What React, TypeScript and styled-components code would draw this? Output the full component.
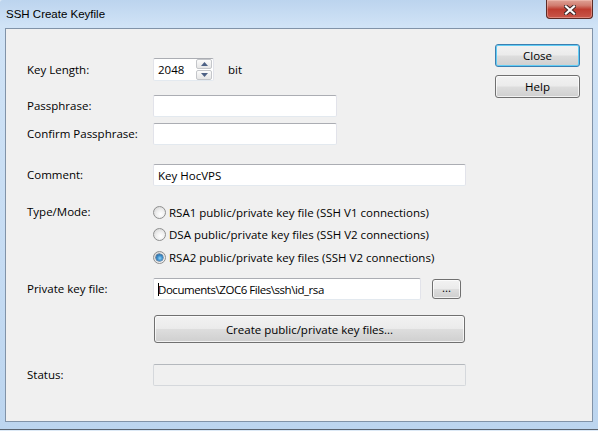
import React from "react";
import styled, { createGlobalStyle, css } from "styled-components";

const UI_FONT = `"Open Sans", "DejaVu Sans Condensed", sans-serif`;
const TITLE_FONT = `"Liberation Sans", "Noto Sans", sans-serif`;

const GlobalStyle = createGlobalStyle`
  html, body { margin: 0; padding: 0; }
  body { width: 598px; height: 431px; overflow: hidden; background: #dce9f6; }
  * { box-sizing: border-box; }
`;

const Window = styled.div`
  width: 598px;
  height: 430px;
  display: flex;
  flex-direction: column;
  background: linear-gradient(to bottom, #bcd4ee 0px, #d0e3f6 26px, #c6dcf3 60%, #bcd5ef 100%);
  border-bottom: 1px solid #5a6470;
  border-top-left-radius: 3px;
  font-family: ${UI_FONT};
  font-size: 11.5px;
  color: #000;
`;

const TitleBar = styled.div`
  height: 28px;
  flex: none;
  display: flex;
  align-items: flex-start;
  justify-content: space-between;
  padding-left: 6px;
`;

const Title = styled.div`
  font-family: ${TITLE_FONT};
  font-size: 11.5px;
  line-height: 16px;
  margin-top: 6px;
  color: #000;
`;

const CaptionClose = styled.div`
  width: 47px;
  height: 19px;
  margin-right: 5px;
  border: 1px solid #5c2b26;
  border-top: none;
  border-radius: 0 0 4px 4px;
  background: linear-gradient(
    to bottom,
    #dfa296 0%,
    #d17d70 30%,
    #be3d30 52%,
    #c2443700 100%
  ),
    #c9574a;
  box-shadow: inset 0 0 0 1px rgba(255, 210, 200, 0.4);
  display: flex;
  align-items: center;
  justify-content: center;
  padding-top: 1px;
`;

const Client = styled.div`
  flex: 1;
  margin: 0 5px 7px 5px;
  border: 1px solid #8193a8;
  background: #f0f0f0;
  display: flex;
`;

const FormColumn = styled.div`
  flex: 1;
  padding: 29px 0 0 21px;
  display: flex;
  flex-direction: column;
`;

const SideColumn = styled.div`
  width: 85px;
  margin-right: 12px;
  padding-top: 15px;
  display: flex;
  flex-direction: column;
  gap: 8px;
`;

const Row = styled.div<{ $h: number; $mt?: number }>`
  display: grid;
  grid-template-columns: 126px auto;
  align-items: center;
  justify-content: start;
  height: ${(p) => p.$h}px;
  margin-top: ${(p) => p.$mt ?? 0}px;
`;

const BlockRow = styled.div<{ $mt?: number }>`
  display: grid;
  grid-template-columns: 126px auto;
  align-items: start;
  justify-content: start;
  margin-top: ${(p) => p.$mt ?? 0}px;
`;

const Label = styled.div`
  line-height: 22px;
  white-space: nowrap;
`;

const Inline = styled.div`
  display: flex;
  align-items: center;
`;

const TextBox = styled.div<{ $w: number; $disabled?: boolean; $tight?: boolean }>`
  width: ${(p) => p.$w}px;
  height: 22px;
  border: 1px solid #e2e3ea;
  border-top-color: #abadb3;
  border-bottom-color: #e3e9ef;
  border-radius: 2px;
  background: #fff;
  padding-left: 4px;
  display: flex;
  align-items: center;
  white-space: nowrap;
  overflow: hidden;
  letter-spacing: ${(p) => (p.$tight ? "-0.45px" : "normal")};
  ${(p) =>
    p.$disabled &&
    css`
      background: #f0f0f0;
      border-color: #d5d8dc;
      border-top-color: #b4b8bd;
    `}
`;

const SpinBox = styled(TextBox)`
  height: 23px;
  padding-right: 1px;
  justify-content: space-between;
`;

const SpinButtons = styled.div`
  display: flex;
  flex-direction: column;
  gap: 1px;
`;

const SpinButton = styled.div`
  width: 16px;
  height: 10px;
  border: 1px solid #c4c6ca;
  border-radius: 2px;
  background: linear-gradient(to bottom, #fbfbfb, #e6e6e6);
  display: flex;
  align-items: center;
  justify-content: center;
`;

const Unit = styled.span`
  margin-left: 14px;
`;

const Caret = styled.span`
  display: inline-block;
  width: 1px;
  height: 13px;
  background: #000;
  margin-right: -1px;
`;

const buttonLook = css`
  font-family: ${UI_FONT};
  font-size: 11.5px;
  color: #000;
  border: 1px solid #707070;
  border-radius: 3px;
  background: linear-gradient(to bottom, #f2f2f2 0%, #ebebeb 48%, #dddddd 52%, #cfcfcf 100%);
  box-shadow: inset 0 0 0 1px rgba(255, 255, 255, 0.7);
  display: flex;
  align-items: center;
  justify-content: center;
  padding: 0;
`;

const PushButton = styled.div<{ $default?: boolean }>`
  ${buttonLook};
  height: 23px;
  ${(p) =>
    p.$default &&
    css`
      border-color: #3c7fb1;
      box-shadow: inset 0 0 0 1px #62cdf5;
    `}
`;

const BrowseButton = styled.div`
  ${buttonLook};
  width: 29px;
  height: 20px;
  margin-left: 11px;
  padding-bottom: 3px;
`;

const CreateButton = styled.div`
  ${buttonLook};
  width: 311px;
  height: 28px;
  margin-left: 1px;
`;

const RadioList = styled.div`
  display: flex;
  flex-direction: column;
`;

const RadioRow = styled.div<{ $h: number }>`
  height: ${(p) => p.$h}px;
  display: flex;
  align-items: center;
  white-space: nowrap;
`;

const RadioCircle = styled.span<{ $checked?: boolean }>`
  width: 13px;
  height: 13px;
  border-radius: 50%;
  border: 1px solid #8e8f8f;
  background: radial-gradient(circle at 60% 65%, #ffffff 0%, #f0f0f0 40%, #cfcfcf 100%);
  margin-right: 3px;
  display: flex;
  align-items: center;
  justify-content: center;
  flex: none;
  &::after {
    content: "";
    display: ${(p) => (p.$checked ? "block" : "none")};
    width: 7px;
    height: 7px;
    border-radius: 50%;
    background: radial-gradient(circle at 55% 60%, #8fd3fb 0%, #3b8cc8 45%, #174f86 100%);
    box-shadow: 0 0 0 0.5px #1b3f66;
  }
`;

const Arrow = ({ up }: { up?: boolean }) => (
  <svg width="7" height="4" viewBox="0 0 7 4">
    <path d={up ? "M0 4 L3.5 0 L7 4 Z" : "M0 0 L3.5 4 L7 0 Z"} fill="#4d6185" />
  </svg>
);

const CloseGlyph = () => (
  <svg width="12" height="10" viewBox="0 0 12 10">
    <path
      d="M2 1.5 L10 8.5 M10 1.5 L2 8.5"
      stroke="#3a2525"
      strokeWidth="4"
      strokeLinecap="square"
    />
    <path
      d="M2 1.5 L10 8.5 M10 1.5 L2 8.5"
      stroke="#ffffff"
      strokeWidth="2.2"
      strokeLinecap="square"
    />
  </svg>
);

const modes = [
  { text: "RSA1 public/private key file (SSH V1 connections)", h: 22 },
  { text: "DSA public/private key files (SSH V2 connections)", h: 23 },
  { text: "RSA2 public/private key files (SSH V2 connections)", h: 22, checked: true },
];

export default function App() {
  return (
    <>
      <GlobalStyle />
      <Window>
        <TitleBar>
          <Title>SSH Create Keyfile</Title>
          <CaptionClose>
            <CloseGlyph />
          </CaptionClose>
        </TitleBar>
        <Client>
          <FormColumn>
            <Row $h={23}>
              <Label>Key Length:</Label>
              <Inline>
                <SpinBox $w={61}>
                  <span>2048</span>
                  <SpinButtons>
                    <SpinButton>
                      <Arrow up />
                    </SpinButton>
                    <SpinButton>
                      <Arrow />
                    </SpinButton>
                  </SpinButtons>
                </SpinBox>
                <Unit>bit</Unit>
              </Inline>
            </Row>
            <Row $h={22} $mt={14}>
              <Label>Passphrase:</Label>
              <TextBox $w={184} />
            </Row>
            <Row $h={22} $mt={6}>
              <Label>Confirm Passphrase:</Label>
              <TextBox $w={184} />
            </Row>
            <Row $h={22} $mt={19}>
              <Label>Comment:</Label>
              <TextBox $w={313}>Key HocVPS</TextBox>
            </Row>
            <BlockRow $mt={15}>
              <Label>Type/Mode:</Label>
              <RadioList>
                {modes.map((m) => (
                  <RadioRow key={m.text} $h={m.h}>
                    <RadioCircle $checked={m.checked} />
                    {m.text}
                  </RadioRow>
                ))}
              </RadioList>
            </BlockRow>
            <Row $h={22} $mt={10}>
              <Label>Private key file:</Label>
              <Inline>
                <TextBox $w={268} $tight>
                  <Caret />
                  Documents\ZOC6 Files\ssh\id_rsa
                </TextBox>
                <BrowseButton>...</BrowseButton>
              </Inline>
            </Row>
            <Row $h={28} $mt={15}>
              <span />
              <CreateButton>Create public/private key files...</CreateButton>
            </Row>
            <Row $h={23} $mt={20}>
              <Label>Status:</Label>
              <TextBox $w={313} $disabled />
            </Row>
          </FormColumn>
          <SideColumn>
            <PushButton $default>Close</PushButton>
            <PushButton>Help</PushButton>
          </SideColumn>
        </Client>
      </Window>
    </>
  );
}
